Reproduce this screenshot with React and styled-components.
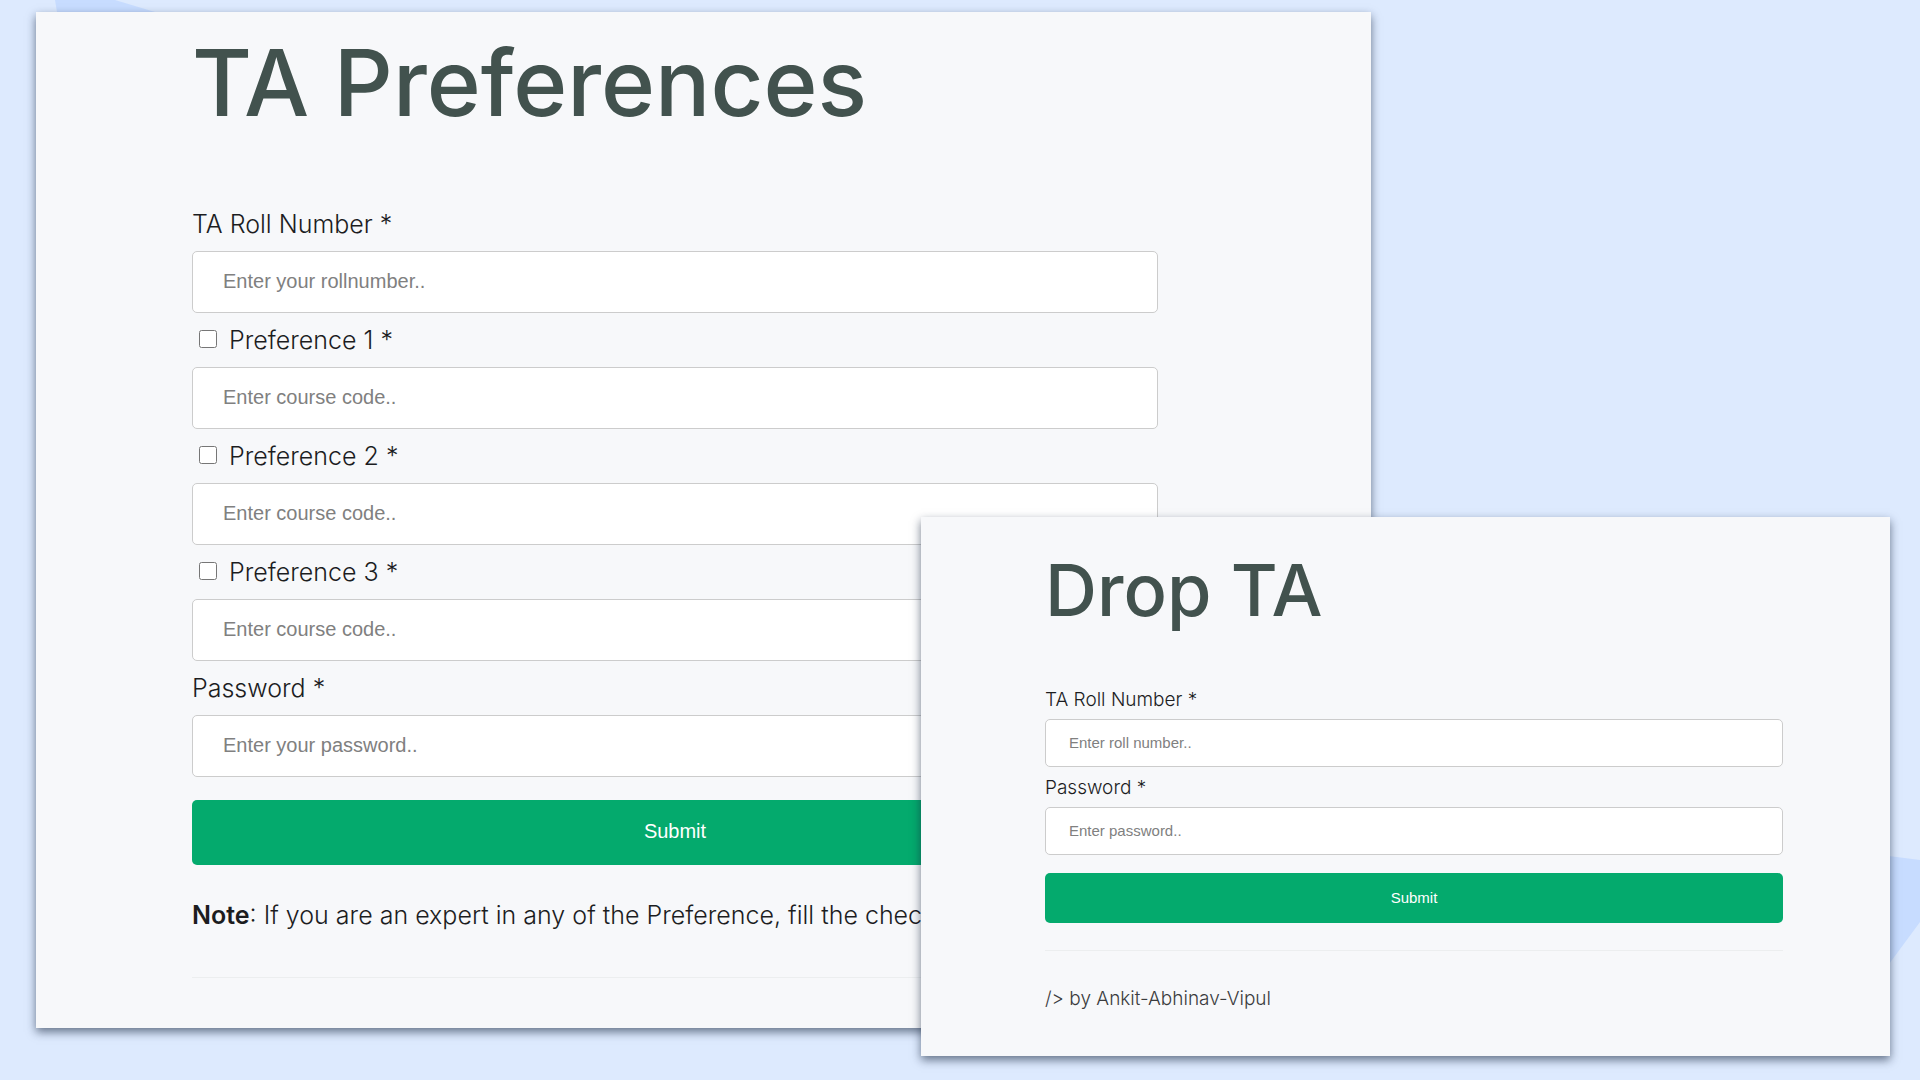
import React from "react";
import styled, { createGlobalStyle } from "styled-components";

const GlobalStyle = createGlobalStyle`
  *, *::before, *::after { box-sizing: border-box; }
  body {
    margin: 0;
    background: #ddeafe;
    color: #1c1d1f;
    font-family: Inter, "Open Sans", sans-serif;
  }
`;

const Stage = styled.main`
  position: relative;
  display: grid;
  grid-template-columns: 885fr 450fr 519fr;
  min-height: 100vh;
  padding: 12px 30px 24px 36px;
  overflow: hidden;
`;

const Backdrop = styled.svg`
  position: absolute;
  inset: 0;
  width: 100%;
  height: 100%;
  fill: #c7dcff;
`;

const Panel = styled.section`
  position: relative;
  background: #f7f8fa;
  box-shadow: 0 4px 9px rgba(20, 35, 60, 0.6);
  grid-row: 1;
`;

const PreferencesPanel = styled(Panel)`
  grid-column: 1 / 3;
  align-self: start;
  padding: 11px 213px 50px 156px;
`;

const DropPanel = styled(Panel)`
  grid-column: 2 / 4;
  align-self: end;
  padding: 28px 107px 43px 124px;
`;

const Title = styled.h1`
  margin: 0;
  color: #42524e;
  font-weight: 500;
  font-size: ${(p) => (p.$large ? "92px" : "72px")};
  line-height: ${(p) => (p.$large ? "120px" : "90px")};
  margin-bottom: ${(p) => (p.$large ? "54px" : "44px")};
  white-space: nowrap;
`;

const Form = styled.form`
  display: flex;
  flex-direction: column;
`;

const LabelRow = styled.div`
  display: flex;
  align-items: center;
  height: ${(p) => (p.$large ? "54px" : "40px")};
  font-size: ${(p) => (p.$large ? "25px" : "19px")};
  font-weight: 300;
`;

const Tick = styled.input`
  width: 18px;
  height: 18px;
  margin: 0 12px 2px 7px;
`;

const TextBox = styled.input`
  width: 100%;
  height: ${(p) => (p.$large ? "62px" : "48px")};
  padding: ${(p) => (p.$large ? "0 30px 2px" : "0 23px 2px")};
  border: 1px solid #cccccc;
  border-radius: 5px;
  background: #ffffff;
  font-family: "Liberation Sans", Arial, sans-serif;
  font-size: ${(p) => (p.$large ? "20px" : "15px")};

  &::placeholder {
    color: #808080;
    opacity: 1;
  }
`;

const Submit = styled.button`
  width: 100%;
  height: ${(p) => (p.$large ? "65px" : "50px")};
  margin-top: ${(p) => (p.$large ? "23px" : "18px")};
  padding: 0 0 2px;
  border: 0;
  border-radius: 5px;
  background: #04aa6d;
  color: #ffffff;
  font-family: "Liberation Sans", Arial, sans-serif;
  font-size: ${(p) => (p.$large ? "20px" : "15px")};
`;

const Note = styled.p`
  margin: 32px 0 44px;
  font-size: 25px;
  line-height: 36px;
  font-weight: 300;
  white-space: nowrap;

  b { font-weight: 600; }
`;

const Rule = styled.hr`
  width: 100%;
  height: 1px;
  margin: ${(p) => (p.$spaced ? "27px 0 34px" : "0")};
  border: 0;
  background: #eceeef;
`;

const Credit = styled.p`
  margin: 0;
  color: #3b3c3e;
  font-size: 19px;
  line-height: 28px;
  font-weight: 300;
`;

function Field({ id, label, placeholder, type = "text", large, tick }) {
  return (
    <>
      <LabelRow $large={large}>
        {tick && <Tick type="checkbox" aria-label={`Expert in ${label}`} />}
        <label htmlFor={id}>{label} *</label>
      </LabelRow>
      <TextBox id={id} type={type} placeholder={placeholder} $large={large} />
    </>
  );
}

const stay = (event) => event.preventDefault();

export default function App() {
  return (
    <>
      <GlobalStyle />
      <Stage>
        <Backdrop viewBox="0 0 1920 1080" preserveAspectRatio="none" aria-hidden="true">
          <polygon points="55,0 115,0 215,30 60,30" />
          <polygon points="1850,851 1920,860 1920,922 1850,1017" />
        </Backdrop>

        <PreferencesPanel>
          <Title $large>TA Preferences</Title>
          <Form onSubmit={stay}>
            <Field large id="roll" label="TA Roll Number" placeholder="Enter your rollnumber.." />
            {[1, 2, 3].map((n) => (
              <Field
                key={n}
                large
                tick
                id={`preference-${n}`}
                label={`Preference ${n}`}
                placeholder="Enter course code.."
              />
            ))}
            <Field large id="password" type="password" label="Password" placeholder="Enter your password.." />
            <Submit type="submit" $large>Submit</Submit>
          </Form>
          <Note><b>Note</b>: If you are an expert in any of the Preference, fill the checkbox</Note>
          <Rule />
        </PreferencesPanel>

        <DropPanel>
          <Title>Drop TA</Title>
          <Form onSubmit={stay}>
            <Field id="drop-roll" label="TA Roll Number" placeholder="Enter roll number.." />
            <Field id="drop-password" type="password" label="Password" placeholder="Enter password.." />
            <Submit type="submit">Submit</Submit>
          </Form>
          <Rule $spaced />
          <Credit>/&gt; by Ankit-Abhinav-Vipul</Credit>
        </DropPanel>
      </Stage>
    </>
  );
}
